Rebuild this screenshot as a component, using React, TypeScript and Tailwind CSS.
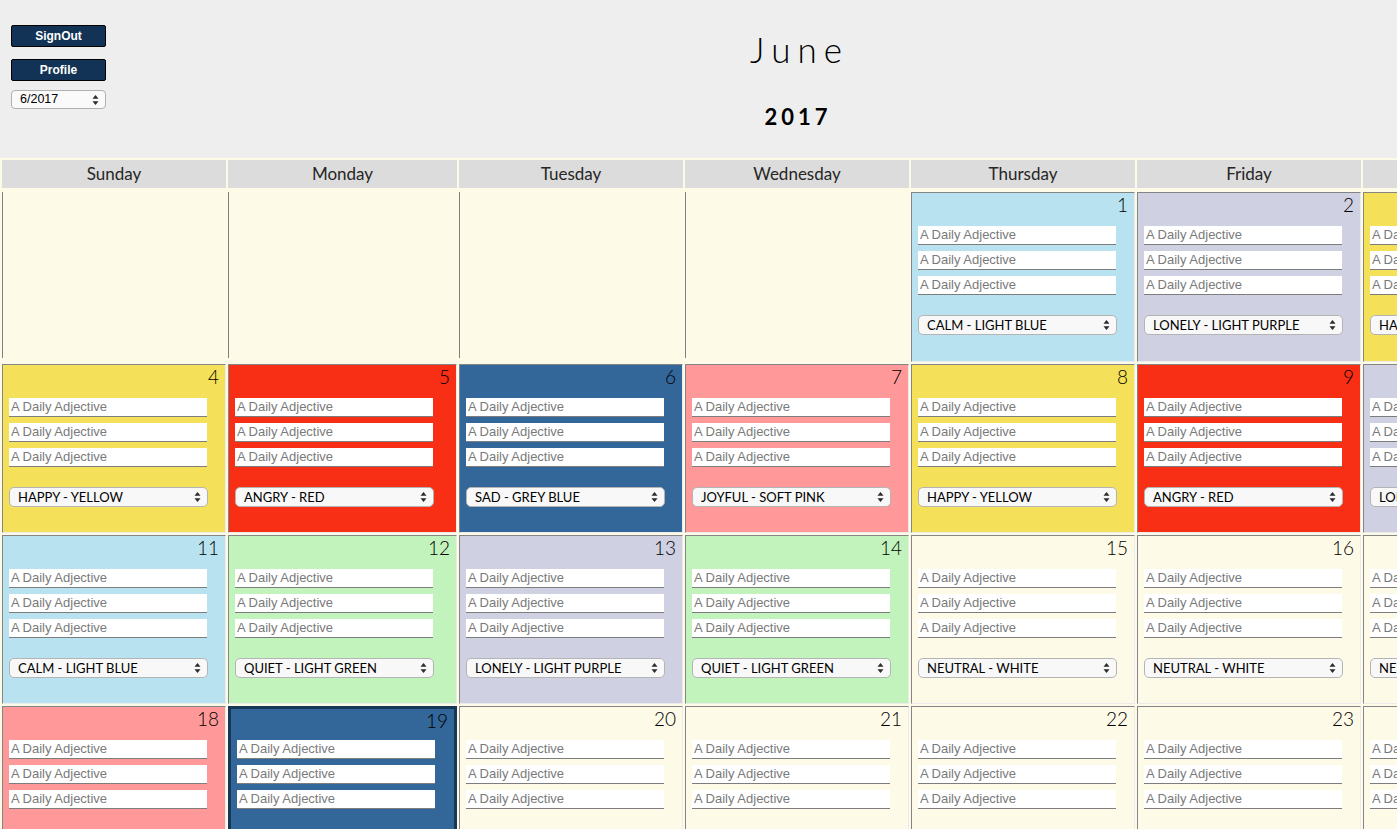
import React from "react";

type Day = { n: number; mood: string; bg: string; today?: boolean } | null;

const WEEKDAYS = ["Sunday", "Monday", "Tuesday", "Wednesday", "Thursday", "Friday", "Saturday"];

const YELLOW = "bg-[#f5e05a]";
const RED = "bg-[#f82e15]";
const GREYBLUE = "bg-[#336699]";
const PINK = "bg-[#ff9999]";
const LBLUE = "bg-[#b9e2f0]";
const LPURPLE = "bg-[#d0d0e3]";
const LGREEN = "bg-[#c3f3bc]";
const NEUTRAL = "bg-[#fdfae8]";

const WEEKS: Day[][] = [
  [
    null,
    null,
    null,
    null,
    { n: 1, mood: "CALM - LIGHT BLUE", bg: LBLUE },
    { n: 2, mood: "LONELY - LIGHT PURPLE", bg: LPURPLE },
    { n: 3, mood: "HAPPY - YELLOW", bg: YELLOW },
  ],
  [
    { n: 4, mood: "HAPPY - YELLOW", bg: YELLOW },
    { n: 5, mood: "ANGRY - RED", bg: RED },
    { n: 6, mood: "SAD - GREY BLUE", bg: GREYBLUE },
    { n: 7, mood: "JOYFUL - SOFT PINK", bg: PINK },
    { n: 8, mood: "HAPPY - YELLOW", bg: YELLOW },
    { n: 9, mood: "ANGRY - RED", bg: RED },
    { n: 10, mood: "LONELY - LIGHT PURPLE", bg: LPURPLE },
  ],
  [
    { n: 11, mood: "CALM - LIGHT BLUE", bg: LBLUE },
    { n: 12, mood: "QUIET - LIGHT GREEN", bg: LGREEN },
    { n: 13, mood: "LONELY - LIGHT PURPLE", bg: LPURPLE },
    { n: 14, mood: "QUIET - LIGHT GREEN", bg: LGREEN },
    { n: 15, mood: "NEUTRAL - WHITE", bg: NEUTRAL },
    { n: 16, mood: "NEUTRAL - WHITE", bg: NEUTRAL },
    { n: 17, mood: "NEUTRAL - WHITE", bg: NEUTRAL },
  ],
  [
    { n: 18, mood: "JOYFUL - SOFT PINK", bg: PINK },
    { n: 19, mood: "SAD - GREY BLUE", bg: GREYBLUE, today: true },
    { n: 20, mood: "NEUTRAL - WHITE", bg: NEUTRAL },
    { n: 21, mood: "NEUTRAL - WHITE", bg: NEUTRAL },
    { n: 22, mood: "NEUTRAL - WHITE", bg: NEUTRAL },
    { n: 23, mood: "NEUTRAL - WHITE", bg: NEUTRAL },
    { n: 24, mood: "NEUTRAL - WHITE", bg: NEUTRAL },
  ],
];

const COLS = "grid grid-cols-[224px_229px_224px_224px_224px_224px_224px] gap-x-[2px]";

function Arrows() {
  return (
    <svg width="7" height="11" viewBox="0 0 7 11" className="pointer-events-none absolute right-[7px] top-1/2 -translate-y-1/2">
      <path d="M3.5 0.5 L6.5 4.3 L0.5 4.3 Z" fill="#2b2b2b" />
      <path d="M3.5 10.5 L6.5 6.7 L0.5 6.7 Z" fill="#2b2b2b" />
    </svg>
  );
}

function MoodSelect({ value }: { value: string }) {
  return (
    <div className="relative w-[199px] h-[20px]">
      <select
        defaultValue={value}
        className="block appearance-none w-full h-full rounded-[5px] border border-[#b4b4b4] bg-[#f8f8f8] pl-[8px] text-[13px] leading-[18px] text-black font-['Lato',sans-serif] outline-none"
      >
        <option>{value}</option>
      </select>
      <Arrows />
    </div>
  );
}

function DayCell({ day }: { day: Day }) {
  if (!day) {
    return <div className="border-l border-[#7f7f7f] bg-[#fdfae8] h-[166px]" />;
  }

  return (
    <div
      className={`${day.bg} h-full ${
        day.today
          ? "border-[3px] border-[#163756] px-[6px]"
          : "border border-t-[#858585] border-l-[#858585] border-r-[#ececec] border-b-[#ececec] px-[6px]"
      }`}
    >
      <div className="h-[24px] text-right text-[19px] leading-[24px] font-light text-black font-['Lato',sans-serif]">{day.n}</div>

      {/* adjectives */}
      <div className={`flex flex-col gap-[6px] ${day.today ? "mt-[7px]" : "mt-[9px]"}`}>
        {[0, 1, 2].map((i) => (
          <input
            key={i}
            placeholder="A Daily Adjective"
            className="block w-[198px] h-[19px] bg-white border-b border-[#7d7d7d] pl-[2px] text-[13px] font-['Liberation_Sans',Arial,sans-serif] text-black placeholder:text-[#7a7a7a] outline-none"
          />
        ))}
      </div>

      <div className="mt-[20px]">
        <MoodSelect value={day.mood} />
      </div>
    </div>
  );
}

export default function App() {
  return (
    <div className="w-[1592px] bg-[#fdfae8] min-h-screen">
      {/* Top */}
      <div className="h-[158px] bg-[#eeeeee] grid grid-cols-[1fr_auto_1fr]">
        <div className="pl-[11px] pt-[25px] flex flex-col items-start">
          <button className="w-[95px] h-[22px] bg-[#133356] border border-black rounded-[2px] text-white text-[12px] font-bold font-['Liberation_Sans',Arial,sans-serif]">
            SignOut
          </button>
          <button className="mt-[12px] w-[95px] h-[22px] bg-[#133356] border border-black rounded-[2px] text-white text-[12px] font-bold font-['Liberation_Sans',Arial,sans-serif]">
            Profile
          </button>
          <div className="relative mt-[9px] w-[95px] h-[19px]">
            <select
              defaultValue="6/2017"
              className="block appearance-none w-full h-full rounded-[4px] border border-[#b0b0b0] bg-[#fafafa] pl-[8px] text-[12.5px] leading-[17px] text-black font-['Liberation_Sans',Arial,sans-serif] outline-none"
            >
              <option>6/2017</option>
            </select>
            <Arrows />
          </div>
        </div>

        <div className="flex flex-col items-center font-['Lato',sans-serif]">
          <div className="mt-[29px] text-[35px] leading-[40px] font-light tracking-[7px] pl-[7px] text-black">June</div>
          <div className="mt-[34px] text-[22px] leading-[28px] font-bold tracking-[4px] pl-[4px] text-black">2017</div>
        </div>

        <div />
      </div>

      {/* Calendar */}
      <div className="px-[2px] pt-[2px] flex flex-col gap-[2px]">
        <div className={`${COLS} mb-[2px]`}>
          {WEEKDAYS.map((d) => (
            <div
              key={d}
              className="h-[28px] bg-[#dcdcdc] flex items-center justify-center text-[17px] text-[#262626] font-['Lato',sans-serif]"
            >
              {d}
            </div>
          ))}
        </div>

        {WEEKS.map((week, wi) => (
          <div key={wi} className={`${COLS} ${wi === 0 ? "h-[170px]" : "h-[169px]"}`}>
            {week.map((day, di) => (
              <DayCell key={di} day={day} />
            ))}
          </div>
        ))}
      </div>
    </div>
  );
}
